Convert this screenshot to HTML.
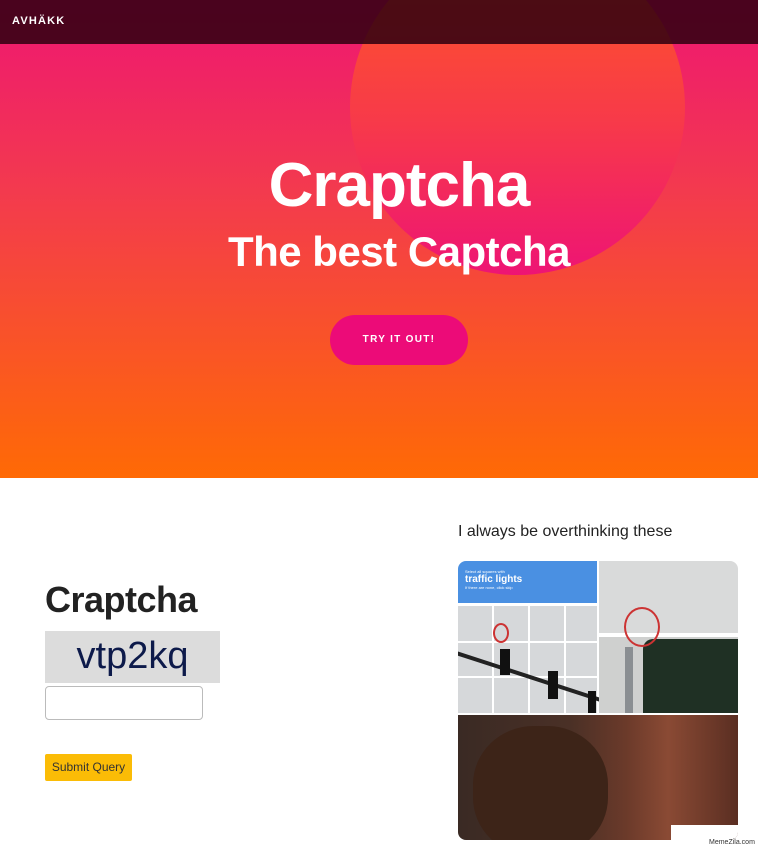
<!DOCTYPE html>
<html><head><style>
*{margin:0;padding:0;box-sizing:border-box}
body{width:758px;height:854px;overflow:hidden;font-family:"Liberation Sans",sans-serif;background:#fff;position:relative}
.hero{position:absolute;left:0;top:0;width:758px;height:478px;background:linear-gradient(180deg,#ee1672 0%,#f33a4e 40%,#ff6a05 100%);overflow:hidden}
.circle{position:absolute;left:350px;top:-60px;width:335px;height:335px;border-radius:50%;background:linear-gradient(180deg,#ff5a22 0%,#f7394a 55%,#ee1474 100%)}
.nav{position:absolute;left:0;top:0;width:758px;height:44px;background:rgba(45,0,15,0.85)}
.nav span{position:absolute;left:12px;top:15px;color:#fff;font-size:11px;font-weight:bold;letter-spacing:1.2px}
h1{position:absolute;left:20px;width:758px;text-align:center;color:#fff;font-weight:bold}
.btn{position:absolute;left:330px;top:315px;width:138px;height:50px;border-radius:25px;background:#ec0b78;color:#fff;font-size:10px;font-weight:bold;letter-spacing:1.3px;text-align:center;line-height:50px}
.meme{position:absolute;left:458px;top:561px;width:280px;height:279px;border-radius:8px;overflow:hidden;background:#fff}
</style></head><body>
<div class="hero">
<div class="circle"></div>
<div class="nav"><span>AVHÄKK</span></div>
<h1 style="top:150px;font-size:62px;letter-spacing:-1px">Craptcha</h1>
<h1 style="top:228px;font-size:42px;letter-spacing:-0.5px">The best Captcha</h1>
<div class="btn">TRY IT OUT!</div>
</div>

<div style="position:absolute;left:45px;top:579px;font-size:36px;font-weight:bold;color:#222;letter-spacing:-0.5px">Craptcha</div>
<div style="position:absolute;left:45px;top:631px;width:175px;height:52px;background:#dcdcdc;color:#0d1a4a;font-size:38px;text-align:center;line-height:50px">vtp2kq</div>
<div style="position:absolute;left:45px;top:686px;width:158px;height:34px;border:1px solid #bbb;border-radius:4px"></div>
<div style="position:absolute;left:45px;top:754px;width:87px;height:27px;background:#fbbc06;border-radius:2px;font-size:12px;color:#333;text-align:center;line-height:27px">Submit Query</div>

<div style="position:absolute;left:458px;top:523px;font-size:16px;color:#222">I always be overthinking these</div>
<div class="meme">
 <div style="position:absolute;left:0;top:0;width:139px;height:42px;background:#4a90e2;color:#fff">
  <div style="font-size:4px;margin:8px 0 0 7px">Select all squares with</div>
  <div style="font-size:10px;font-weight:bold;margin-left:7px">traffic lights</div>
  <div style="font-size:4px;margin-left:7px">If there are none, click skip</div>
 </div>
 <div style="position:absolute;left:0;top:45px;width:139px;height:107px;background:#d6d8da"></div>
 <div style="position:absolute;left:0;top:80px;width:139px;height:2px;background:#fff"></div>
 <div style="position:absolute;left:0;top:115px;width:139px;height:2px;background:#fff"></div>
 <div style="position:absolute;left:34px;top:45px;width:2px;height:107px;background:#fff"></div>
 <div style="position:absolute;left:70px;top:45px;width:2px;height:107px;background:#fff"></div>
 <div style="position:absolute;left:106px;top:45px;width:2px;height:107px;background:#fff"></div>
 <div style="position:absolute;left:-5px;top:115px;width:160px;height:4px;background:#222;transform:rotate(18deg)"></div>
 <div style="position:absolute;left:42px;top:88px;width:10px;height:26px;background:#111"></div>
 <div style="position:absolute;left:90px;top:110px;width:10px;height:28px;background:#111"></div>
 <div style="position:absolute;left:130px;top:130px;width:8px;height:22px;background:#111"></div>
 <div style="position:absolute;left:35px;top:62px;width:16px;height:20px;border:2px solid #c33;border-radius:50%"></div>
 <div style="position:absolute;left:141px;top:0;width:139px;height:72px;background:#d9dada"></div>
 <div style="position:absolute;left:141px;top:76px;width:139px;height:76px;background:#cfd0cf"></div>
 <div style="position:absolute;left:185px;top:78px;width:95px;height:74px;background:#1f3024;border-radius:10px 0 0 0"></div>
 <div style="position:absolute;left:167px;top:86px;width:8px;height:66px;background:#8a8e92"></div>
 <div style="position:absolute;left:166px;top:46px;width:36px;height:40px;border:2px solid #c33;border-radius:50%"></div>
 <div style="position:absolute;left:0;top:154px;width:280px;height:125px;background:linear-gradient(90deg,#3a2a24 0%,#4a3026 40%,#6b3a2a 60%,#8a4a34 75%,#5a2e22 100%)"></div>
 <div style="position:absolute;left:15px;top:165px;width:135px;height:130px;border-radius:45%;background:#3d2418"></div>
 <div style="position:absolute;left:213px;top:264px;width:67px;height:15px;background:#fff"></div>
</div>
<div style="position:absolute;left:709px;top:839px;font-size:7px;color:#333">MemeZila.com</div>
</body></html>
